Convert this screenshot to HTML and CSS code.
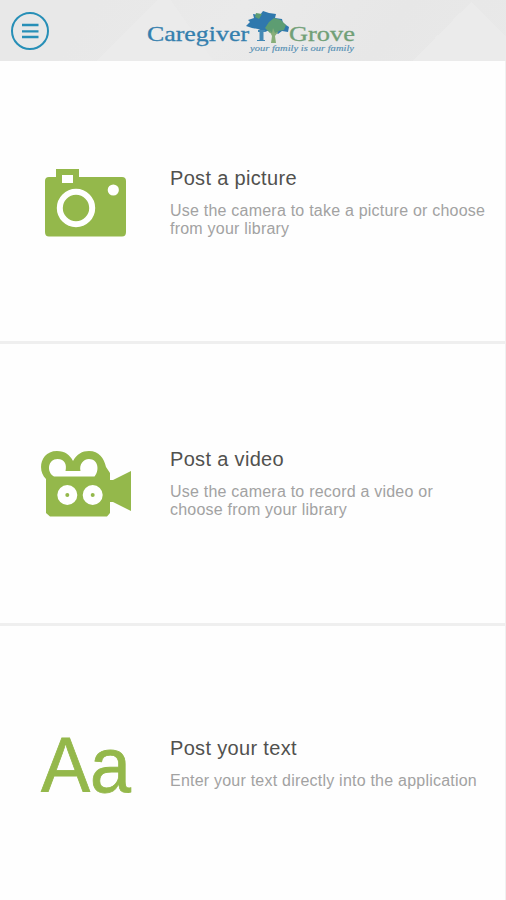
FILE: index.html
```html
<!DOCTYPE html>
<html lang="en">
<head>
<meta charset="utf-8">
<title>Caregiver Grove</title>
<link rel="stylesheet" href="styles.css">
</head>
<body>
<div class="app">
  <header class="header">
    <button class="menu" aria-label="Menu">
      <svg width="40" height="40" viewBox="0 0 40 40" fill="none" stroke="#278fb7">
        <circle cx="20" cy="20" r="18" stroke-width="2"/>
        <path d="M12 14H28.500M12 20.300H28.500M12 26H28.500" stroke-width="2.300"/>
      </svg>
    </button>
    <svg class="logo" width="212" height="46" viewBox="145 8 212 46">
      <path fill="#2f78ad" d="M246 26L250 22L248 20L254 18L253 14L260 15L263 11L269 13L276 14L275 18L282 19L283 23L289 27L288 32L282 31L278 34L272 29L265 32L258 29L252 28Z"/>
      <path fill="#5d9d72" d="M256 13L262 14L259 19L255 17ZM269 22L274 18L281 20L286 25L284 30L278 31L276 34L270 33L265 28Z"/>
      <path fill="#4389b5" d="M258 30H265V32H263.500V40H265V41H257V40H259.500V32H258Z"/>
      <path fill="#87ae78" d="M269 30L272 33L273 28L275 33L279 31L275 36L276 43H271L272 36Z"/>
      <text class="logo-word logo-blue" x="147" y="41" textLength="102" lengthAdjust="spacingAndGlyphs">Caregiver</text>
      <text class="logo-word logo-green" x="289" y="41" textLength="66" lengthAdjust="spacingAndGlyphs">Grove</text>
      <text class="logo-tag" x="250" y="50.500" textLength="104" lengthAdjust="spacingAndGlyphs">your family is our family</text>
    </svg>
  </header>
  <main class="options">
    <section class="option">
      <div class="icon">
        <svg width="92" height="70" viewBox="40 168 92 70">
          <path fill="#94b84b" d="M56 169H79V177H122Q126 177 126 181V232Q126 236.500 122 236.500H49Q45 236.500 45 232V181Q45 177 49 177H56Z"/>
          <path fill="#fff" d="M62 175H73V183H62Z"/>
          <circle cx="76" cy="208" r="16.200" fill="none" stroke="#fff" stroke-width="6"/>
          <circle cx="113.300" cy="190" r="5.600" fill="#fff"/>
        </svg>
      </div>
      <div class="copy">
        <h2>Post a picture</h2>
        <p>Use the camera to take a picture or choose from your library</p>
      </div>
    </section>
    <section class="option">
      <div class="icon">
        <svg width="92" height="70" viewBox="40 449 92 70">
          <path fill="#94b84b" d="M46 479C37 471 40 451 57 451C65 451 70 455 73 461C77 454 82 451 89 451C99 451 104 458 106 467L110 473V480L113 480L131 471V511L113 502H110V513L107 516.500H50L46 513Z"/>
          <path fill="#fff" d="M54 476.500C46 472 48 459 57.500 459C65 459 67 465 65.500 471H80.500C79 465 83 459 89 459C98 459 100 470 94.500 476.500Z"/>
          <circle cx="67.300" cy="495" r="10" fill="#fff"/>
          <circle cx="92.700" cy="495" r="10" fill="#fff"/>
          <circle cx="67.300" cy="495" r="2" fill="#94b84b"/>
          <circle cx="92.700" cy="495" r="2" fill="#94b84b"/>
        </svg>
      </div>
      <div class="copy copy-narrow">
        <h2>Post a video</h2>
        <p>Use the camera to record a video or choose from your library</p>
      </div>
    </section>
    <section class="option">
      <div class="icon">
        <svg width="96" height="92" viewBox="40 720 96 92">
          <text class="letters" x="41" y="792.500" textLength="90" lengthAdjust="spacingAndGlyphs">Aa</text>
        </svg>
      </div>
      <div class="copy">
        <h2>Post your text</h2>
        <p>Enter your text directly into the application</p>
      </div>
    </section>
  </main>
</div>
</body>
</html>
```
FILE: styles.css
```css
* { box-sizing: border-box; }
body {
  margin: 0;
  background: #fefefe;
  font-family: "Liberation Sans", Arial, sans-serif;
}
.app {
  height: 900px;
  display: flex;
  flex-direction: column;
}
.header {
  flex: none;
  height: 61px;
  display: flex;
  align-items: center;
  padding-left: 10px;
  background:
    conic-gradient(from 135deg at 471px 2px, #ebebeb 90deg, transparent 0),
    conic-gradient(from 145deg at 165px -8px, #ebebeb 80deg, transparent 0),
    linear-gradient(125deg, #e8e8e8 0 18%, #eaeaea 45%, #e7e7e7 75%, #e9e9e9);
}
.menu {
  display: flex;
  padding: 0;
  border: 0;
  background: none;
}
.logo { margin-left: 95px; }
.logo-word {
  font-family: "Liberation Serif", serif;
  font-size: 22px;
  stroke-width: .3px;
}
.logo-blue { fill: #347fae; stroke: #347fae; }
.logo-green { fill: #71a077; stroke: #71a077; }
.logo-tag {
  font: italic 8.500px "Liberation Serif", serif;
  fill: #5690b4;
  stroke: #5690b4;
  stroke-width: .15px;
}
.options {
  flex: 1;
  border-right: 1px solid #f0f0f0;
}
.option {
  height: 282px;
  display: flex;
  align-items: center;
  border-bottom: 3px solid #efefef;
}
.option:first-child { height: 283px; }
.option:first-child .copy { padding-top: 2px; }
.option:nth-child(2) .copy { padding-bottom: 2px; }
.option:nth-child(2) .icon { padding-top: 1px; }
.option:last-child {
  height: 274px;
  border-bottom: 0;
}
.icon {
  flex: none;
  width: 170px;
  display: flex;
  padding: 3px 0 0 40px;
}
.icon svg { overflow: visible; }
.letters {
  font-size: 78px;
  fill: #94b84b;
  stroke: #94b84b;
  stroke-width: .8px;
}
.copy { width: 322px; }
.copy-narrow { width: 300px; }
h2 {
  margin: 0;
  font-size: 20px;
  line-height: 24px;
  font-weight: 400;
  letter-spacing: .33px;
  color: #51514e;
}
p {
  margin: 12px 0 0;
  font-size: 16px;
  line-height: 18px;
  letter-spacing: .22px;
  color: #a2a2a2;
}
```
